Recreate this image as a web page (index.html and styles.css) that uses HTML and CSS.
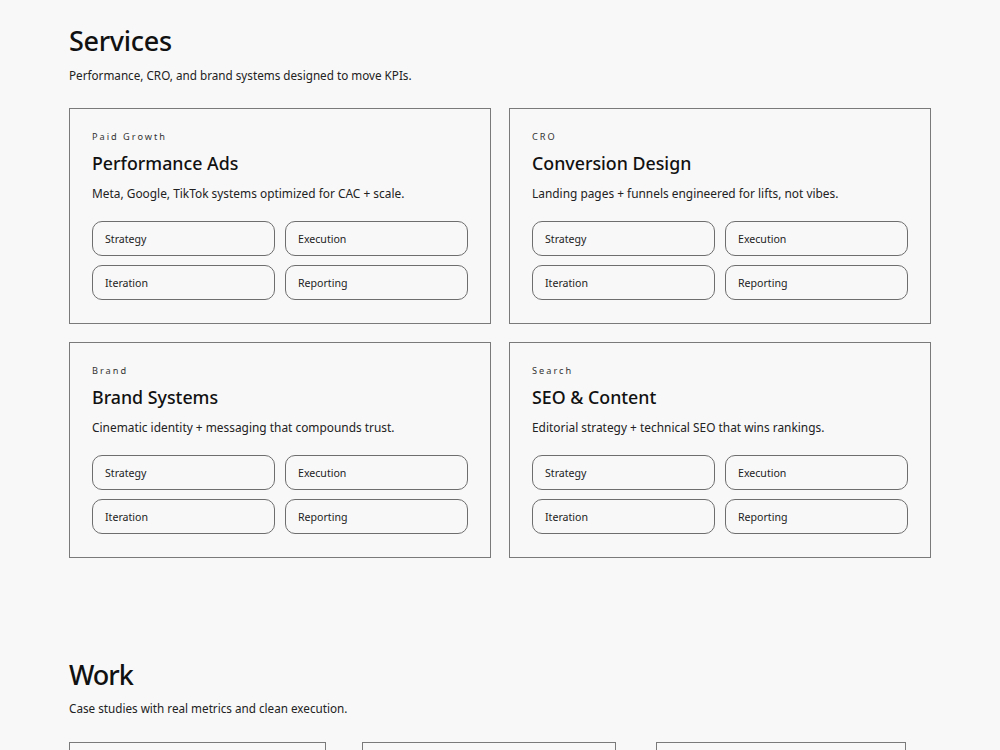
FILE: index.html
```html
<!DOCTYPE html>
<html lang="en">
<head>
  <meta charset="UTF-8">
  <meta name="viewport" content="width=device-width, initial-scale=1.0">
  <title>Services</title>
  <link rel="stylesheet" href="styles.css">
</head>
<body>
  <section class="section services">
    <h1>Services</h1>
    <p class="lead">Performance, CRO, and brand systems designed to move KPIs.</p>

    <div class="service-grid">
      <div class="service-card">
        <div class="eyebrow">Paid Growth</div>
        <h2>Performance Ads</h2>
        <p class="desc">Meta, Google, TikTok systems optimized for CAC + scale.</p>
        <div class="pills">
          <span class="pill">Strategy</span>
          <span class="pill">Execution</span>
          <span class="pill">Iteration</span>
          <span class="pill">Reporting</span>
        </div>
      </div>

      <div class="service-card">
        <div class="eyebrow">CRO</div>
        <h2>Conversion Design</h2>
        <p class="desc">Landing pages + funnels engineered for lifts, not vibes.</p>
        <div class="pills">
          <span class="pill">Strategy</span>
          <span class="pill">Execution</span>
          <span class="pill">Iteration</span>
          <span class="pill">Reporting</span>
        </div>
      </div>

      <div class="service-card">
        <div class="eyebrow">Brand</div>
        <h2>Brand Systems</h2>
        <p class="desc">Cinematic identity + messaging that compounds trust.</p>
        <div class="pills">
          <span class="pill">Strategy</span>
          <span class="pill">Execution</span>
          <span class="pill">Iteration</span>
          <span class="pill">Reporting</span>
        </div>
      </div>

      <div class="service-card">
        <div class="eyebrow">Search</div>
        <h2>SEO &amp; Content</h2>
        <p class="desc">Editorial strategy + technical SEO that wins rankings.</p>
        <div class="pills">
          <span class="pill">Strategy</span>
          <span class="pill">Execution</span>
          <span class="pill">Iteration</span>
          <span class="pill">Reporting</span>
        </div>
      </div>
    </div>
  </section>

  <section class="section work">
    <h1>Work</h1>
    <p class="lead">Case studies with real metrics and clean execution.</p>

    <div class="work-grid">
      <div class="work-card"></div>
      <div class="work-card"></div>
      <div class="work-card"></div>
    </div>
  </section>
</body>
</html>
```

FILE: styles.css
```css
body {
  font-family: "Noto Sans", "Open Sans", sans-serif;
  margin: 0;
  padding: 0;
  background-color: #f8f8f8;
  color: #111;
}
.section {
  width: 862px;
  margin: 0 0 0 69px;
}
.services {
  padding-top: 24px;
}
.work {
  padding-top: 100px;
}
h1 {
  font-size: 27px;
  font-weight: 500;
  margin: 0;
  line-height: 34px;
  letter-spacing: -0.3px;
}
.work h1 {
  letter-spacing: -1px;
}
.lead {
  font-size: 11.7px;
  color: #222;
  margin: 8px 0 0;
  line-height: 18px;
}
.work .lead {
  margin-top: 7px;
}
.service-grid {
  display: grid;
  grid-template-columns: 1fr 1fr;
  gap: 18px 18px;
  margin-top: 24px;
}
.service-card {
  border: 1px solid #7a7a7a;
  padding: 21px 22px 23px;
}
.eyebrow {
  font-size: 9.2px;
  letter-spacing: 2px;
  color: #333;
  line-height: 14px;
}
h2 {
  font-size: 17.8px;
  font-weight: 500;
  margin: 6px 0 0;
  line-height: 26px;
}
.desc {
  font-size: 11.9px;
  margin: 8px 0 0;
  line-height: 18px;
  color: #222;
}
.pills {
  display: grid;
  grid-template-columns: 1fr 1fr;
  gap: 9px 10px;
  margin-top: 19px;
}
.pill {
  box-sizing: border-box;
  border: 1px solid #6e6e6e;
  border-radius: 10px;
  height: 35px;
  display: flex;
  align-items: center;
  padding-left: 12px;
  font-size: 10.6px;
  color: #222;
}
.work-grid {
  display: grid;
  grid-template-columns: 257px 254px 254px;
  gap: 36px 36px;
  margin-top: 25px;
}
.work-card {
  border: 1px solid #7a7a7a;
  height: 200px;
}
.work-card + .work-card + .work-card {
  margin-left: 4px;
}
```
